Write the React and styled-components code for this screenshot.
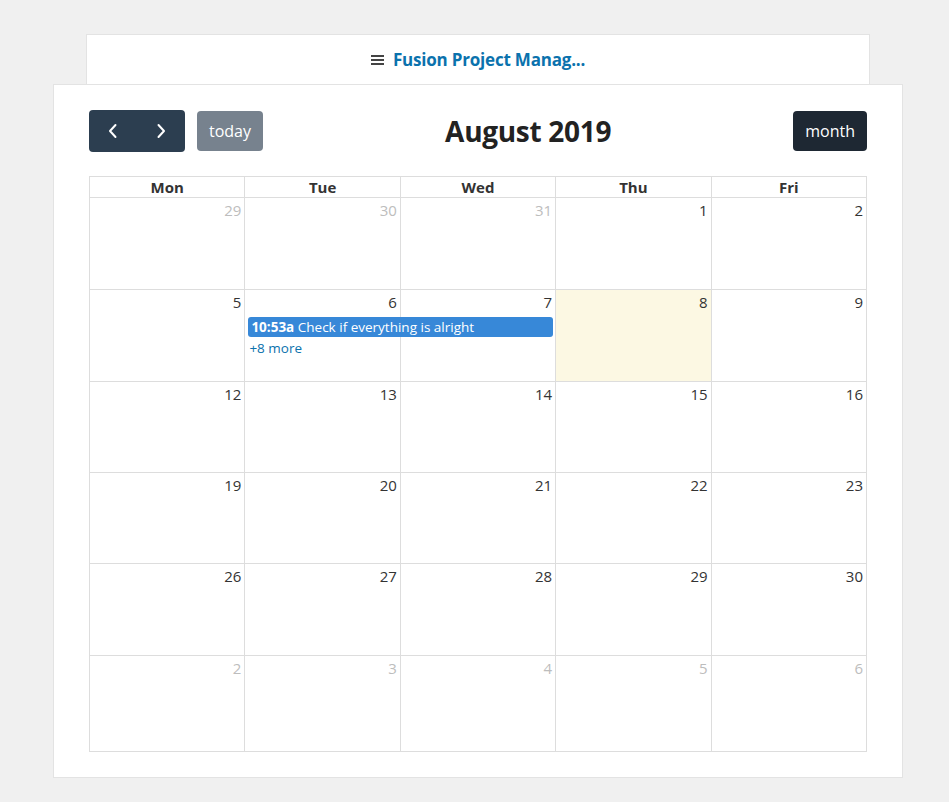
import React from 'react'
import styled, { createGlobalStyle } from 'styled-components'

const GlobalStyle = createGlobalStyle`
  html, body {
    margin: 0;
    padding: 0;
    background: #f0f0f0;
    font-family: "Open Sans", "Noto Sans", sans-serif;
    color: #333;
  }
`

const PageS = styled.div`
  width: 850px;
  margin-left: 53px;
  padding-top: 34px;
`

const TopBarS = styled.div`
  margin: 0 33px;
  height: 50px;
  background: #fff;
  border: 1px solid #e3e3e3;
  border-bottom: none;
  display: flex;
  align-items: center;
  justify-content: center;
  gap: 9px;
  box-sizing: border-box;
  .x__title {
    color: #0b72ad;
    font-weight: 700;
    font-size: 17px;
    letter-spacing: -0.2px;
  }
`

const CardS = styled.div`
  background: #fff;
  border: 1px solid #e3e3e3;
  height: 694px;
  box-sizing: border-box;
  padding: 25px 35px 0 35px;
`

const ToolbarS = styled.div`
  display: flex;
  justify-content: space-between;
  align-items: center;
  height: 42px;
  margin-bottom: 24px;
  .x__left { display: flex; align-items: center; gap: 12px; }
  h2 {
    margin: 0;
    font-size: 28px;
    font-weight: 700;
    color: #222;
    letter-spacing: -0.3px;
  }
`

const NavGroupS = styled.div`
  display: flex;
  background: #2c3e50;
  border-radius: 4px;
  height: 42px;
  width: 96px;
`

const NavButtonS = styled.button`
  flex: 1;
  background: none;
  border: none;
  display: flex;
  align-items: center;
  justify-content: center;
  padding: 0;
  cursor: pointer;
`

const ButtonS = styled.button`
  height: 40px;
  padding: 0 12px;
  border: none;
  border-radius: 4px;
  font-family: inherit;
  font-size: 16px;
  color: #fff;
  background: ${(p) => p.$bg};
  cursor: pointer;
`

const GridS = styled.div`
  display: grid;
  grid-template-columns: repeat(5, 1fr);
  grid-template-rows: 21px 92px 92px 91px 91px 92px 96px;
  border-top: 1px solid #ddd;
  border-left: 1px solid #ddd;
  width: 777px;
`

const HeadCellS = styled.div`
  border-right: 1px solid #ddd;
  border-bottom: 1px solid #ddd;
  text-align: center;
  font-weight: 700;
  font-size: 15px;
  line-height: 20px;
  color: #333;
`

const DayCellS = styled.div`
  border-right: 1px solid #ddd;
  border-bottom: 1px solid #ddd;
  background: ${(p) => (p.$today ? '#fcf8e3' : '#fff')};
  position: relative;
  padding: 1px 2px 0 2px;
  .x__num {
    text-align: right;
    font-size: 15px;
    line-height: 22px;
    padding-right: 1px;
    color: ${(p) => (p.$other ? '#bdbdbd' : '#333')};
  }
`

const EventS = styled.div`
  position: absolute;
  left: 3px;
  top: 27px;
  width: 305px;
  height: 20px;
  background: #3788d8;
  border-radius: 3px;
  color: #fff;
  font-size: 13.5px;
  line-height: 20px;
  padding-left: 3px;
  box-sizing: border-box;
  white-space: nowrap;
  z-index: 2;
  b { font-weight: 700; }
`

const MoreS = styled.a`
  position: absolute;
  left: 4px;
  top: 49px;
  font-size: 13.5px;
  line-height: 18px;
  color: #0b72ad;
  text-decoration: none;
`

const Chevron = ({ dir }) => (
  <svg width="10" height="16" viewBox="0 0 10 16">
    <polyline
      points={dir === 'left' ? '7.5,2 2,8 7.5,14' : '2.5,2 8,8 2.5,14'}
      fill="none" stroke="#fff" strokeWidth="2" strokeLinecap="round" strokeLinejoin="round"
    />
  </svg>
)

const Burger = () => (
  <svg width="13" height="12" viewBox="0 0 13 12">
    <rect x="0" y="1" width="13" height="2" fill="#444" />
    <rect x="0" y="5" width="13" height="2" fill="#444" />
    <rect x="0" y="9" width="13" height="2" fill="#444" />
  </svg>
)

const days = ['Mon', 'Tue', 'Wed', 'Thu', 'Fri']

const weeks = [
  [[29, 1], [30, 1], [31, 1], [1], [2]],
  [[5], [6], [7], [8, 0, 1], [9]],
  [[12], [13], [14], [15], [16]],
  [[19], [20], [21], [22], [23]],
  [[26], [27], [28], [29], [30]],
  [[2, 1], [3, 1], [4, 1], [5, 1], [6, 1]],
]

export default function App () {
  return <>
    <GlobalStyle />
    <PageS>
      <TopBarS>
        <Burger />
        <span className="x__title">Fusion Project Manag...</span>
      </TopBarS>
      <CardS>
        <ToolbarS>
          <div className="x__left">
            <NavGroupS>
              <NavButtonS><Chevron dir="left" /></NavButtonS>
              <NavButtonS><Chevron dir="right" /></NavButtonS>
            </NavGroupS>
            <ButtonS $bg="#77828e">today</ButtonS>
          </div>
          <h2>August 2019</h2>
          <ButtonS $bg="#1e2833">month</ButtonS>
        </ToolbarS>
        <GridS>
          {days.map((d) => <HeadCellS key={d}>{d}</HeadCellS>)}
          {weeks.map((week, wi) => week.map(([n, other, today], di) => (
            <DayCellS key={wi + '-' + di} $other={!!other} $today={!!today}>
              <div className="x__num">{n}</div>
              {wi === 1 && di === 1 && <>
                <EventS><b>10:53a</b> Check if everything is alright</EventS>
                <MoreS href="#">+8 more</MoreS>
              </>}
            </DayCellS>
          )))}
        </GridS>
      </CardS>
    </PageS>
  </>
}
